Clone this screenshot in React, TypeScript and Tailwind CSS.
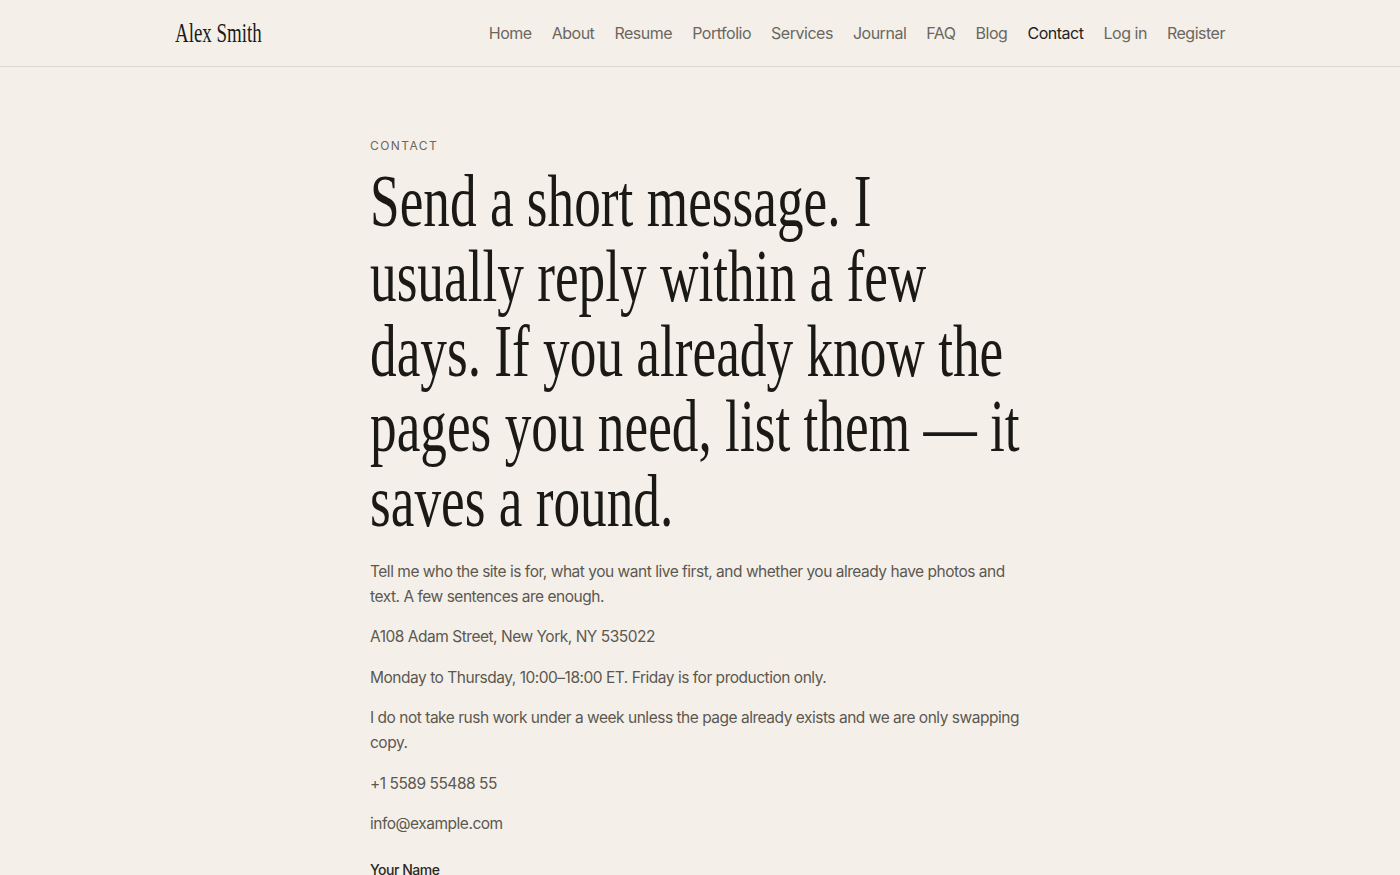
const navLinks = [
  "Home",
  "About",
  "Resume",
  "Portfolio",
  "Services",
  "Journal",
  "FAQ",
  "Blog",
  "Contact",
  "Log in",
  "Register",
];

const details = [
  "A108 Adam Street, New York, NY 535022",
  "Monday to Thursday, 10:00–18:00 ET. Friday is for production only.",
  "I do not take rush work under a week unless the page already exists and we are only swapping copy.",
  "+1 5589 55488 55",
  "info@example.com",
];

const Header = () => (
  <header className="border-b border-[#ddd8cf]">
    <div className="mx-auto flex h-[66px] w-[1050px] items-center justify-between">
      <a
        href="#"
        className="inline-block origin-left scale-x-[0.7] font-['Liberation_Serif',serif] text-[27px] leading-none tracking-normal text-[#1c1b18]"
      >
        Alex Smith
      </a>
      <nav className="flex items-center gap-[20px] text-[16px] leading-5">
        {navLinks.map((link) => (
          <a
            key={link}
            href="#"
            className={
              link === "Contact" ? "text-[#23211d]" : "text-[#6b675f]"
            }
          >
            {link}
          </a>
        ))}
      </nav>
    </div>
  </header>
);

export default function App() {
  return (
    <div className="min-h-screen bg-[#f4f0e9] font-['Inter',sans-serif] tracking-[-0.03em]">
      <Header />
      <main className="mx-auto w-[660px] pt-[71px]">
        <p className="text-[12px] leading-4 tracking-[0.12em] text-[#6b665e]">
          CONTACT
        </p>
        {/* condensed serif: scaled Liberation Serif */}
        <h1 className="mt-[10px] w-[917px] origin-left scale-x-[0.72] font-['Liberation_Serif',serif] text-[74px] leading-[75px] font-normal tracking-normal text-[#1a1916]">
          Send a short message. I usually reply within a few days. If you
          already know the pages you need, list them — it saves a round.
        </h1>
        <div className="mt-[20px] flex flex-col gap-[15.4px] text-[15.5px] leading-[25px] text-[#5c5850]">
          <p>
            Tell me who the site is for, what you want live first, and whether
            you already have photos and text. A few sentences are enough.
          </p>
          {details.map((d) => (
            <p key={d}>{d}</p>
          ))}
        </div>
        <form className="mt-[24px] pb-10">
          <label className="block text-[14px] leading-5 font-medium text-[#2a2824]">
            Your Name
          </label>
          <input className="mt-2 h-11 w-full border border-[#d9d3c9] bg-transparent px-3" />
        </form>
      </main>
    </div>
  );
}
